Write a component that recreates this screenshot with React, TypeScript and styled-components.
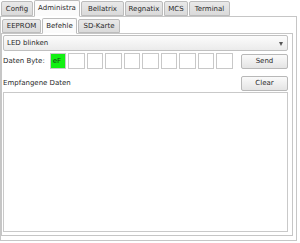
import React from "react";
import styled, { createGlobalStyle } from "styled-components";

const Global = createGlobalStyle`
  html, body { margin: 0; padding: 0; background: #ffffff; }
  body {
    font-family: "DejaVu Sans", "Liberation Sans", sans-serif;
    font-size: 7px;
    color: #2e2e2e;
  }
`;

const Window = styled.div`
  width: 297px;
  display: flex;
  flex-direction: column;
`;

const TabBar = styled.div<{ $inset: number; $height: number }>`
  display: flex;
  align-items: flex-end;
  height: ${(p) => p.$height}px;
  padding-left: ${(p) => p.$inset}px;
  position: relative;
  z-index: 1;
`;

const Tab = styled.div<{ $w: number; $active?: boolean; $h: number }>`
  box-sizing: border-box;
  width: ${(p) => p.$w}px;
  height: ${(p) => (p.$active ? p.$h + 2 : p.$h)}px;
  margin-bottom: ${(p) => (p.$active ? -1 : 0)}px;
  margin-right: 1px;
  border: 1px solid #bcbcbc;
  border-bottom: ${(p) => (p.$active ? "1px solid #ffffff" : "1px solid #bcbcbc")};
  border-radius: 2px 2px 0 0;
  background: ${(p) =>
    p.$active ? "#fbfbfb" : "linear-gradient(#e9e9e9, #dadada)"};
  display: flex;
  align-items: center;
  justify-content: center;
  white-space: nowrap;
  color: #2a2a2a;
  line-height: 1;
  padding-top: ${(p) => (p.$active ? 0 : 1)}px;
`;

const Pane = styled.div<{ $w: number; $h: number; $pad: string }>`
  box-sizing: border-box;
  width: ${(p) => p.$w}px;
  height: ${(p) => p.$h}px;
  border: 1px solid #c6c6c6;
  background: #ffffff;
  padding: ${(p) => p.$pad};
  display: flex;
  flex-direction: column;
`;

const Combo = styled.div`
  box-sizing: border-box;
  height: 16px;
  border: 1px solid #c0c0c0;
  border-radius: 2px;
  background: linear-gradient(#fcfcfc, #ebebeb);
  display: flex;
  align-items: center;
  justify-content: space-between;
  padding: 0 4px 0 3px;
  color: #2a2a2a;
`;

const Arrow = styled.span`
  width: 0;
  height: 0;
  border-left: 2.5px solid transparent;
  border-right: 2.5px solid transparent;
  border-top: 4px solid #555555;
  margin-top: 1px;
`;

const Row = styled.div<{ $mt: number }>`
  display: flex;
  align-items: center;
  height: 16px;
  margin-top: ${(p) => p.$mt}px;
`;

const Label = styled.span`
  white-space: nowrap;
  color: #2a2a2a;
`;

const Boxes = styled.div`
  display: flex;
  gap: 2px;
  margin-left: 5px;
  width: 183px;
  height: 16px;
`;

const ByteBox = styled.div<{ $on?: boolean }>`
  box-sizing: border-box;
  flex: 1;
  border: 1px solid #c8c8c8;
  background: ${(p) => (p.$on ? "#12f012" : "#ffffff")};
  display: flex;
  align-items: center;
  padding-left: 2px;
  color: #1a3a1a;
`;

const Button = styled.div`
  box-sizing: border-box;
  width: 47px;
  height: 15px;
  margin-left: auto;
  border: 1px solid #b8b8b8;
  border-radius: 2px;
  background: linear-gradient(#fafafa, #e4e4e4);
  display: flex;
  align-items: center;
  justify-content: center;
  color: #2a2a2a;
`;

const TextArea = styled.div`
  box-sizing: border-box;
  margin-top: 1px;
  flex: 1;
  border: 1px solid #c9c9c9;
  background: #ffffff;
`;

const topTabs = [
  { t: "Config", w: 32 },
  { t: "Administra", w: 46, a: true },
  { t: "Bellatrix", w: 43 },
  { t: "Regnatix", w: 38 },
  { t: "MCS", w: 24 },
  { t: "Terminal", w: 41 },
];

const innerTabs = [
  { t: "EEPROM", w: 39 },
  { t: "Befehle", w: 35, a: true },
  { t: "SD-Karte", w: 42 },
];

export default function App() {
  const bytes = Array.from({ length: 10 }, (_, i) => i);
  return (
    <>
      <Global />
      <Window>
        <TabBar $inset={1} $height={16}>
          {topTabs.map((x) => (
            <Tab key={x.t} $w={x.w} $h={15} $active={x.a}>
              {x.t}
            </Tab>
          ))}
        </TabBar>
        <Pane $w={297} $h={225} $pad="0 3px 4px 0">
          <TabBar $inset={1} $height={16}>
            {innerTabs.map((x) => (
              <Tab key={x.t} $w={x.w} $h={14} $active={x.a}>
                {x.t}
              </Tab>
            ))}
          </TabBar>
          <Pane $w={292} $h={203} $pad="1px 4px 3px 1px">
            <Combo>
              <span>LED blinken</span>
              <Arrow />
            </Combo>
            <Row $mt={2}>
              <Label>Daten Byte:</Label>
              <Boxes>
                {bytes.map((i) => (
                  <ByteBox key={i} $on={i === 0}>
                    {i === 0 ? "eF" : ""}
                  </ByteBox>
                ))}
              </Boxes>
              <Button>Send</Button>
            </Row>
            <Row $mt={6}>
              <Label>Empfangene Daten</Label>
              <Button>Clear</Button>
            </Row>
            <TextArea />
          </Pane>
        </Pane>
      </Window>
    </>
  );
}
